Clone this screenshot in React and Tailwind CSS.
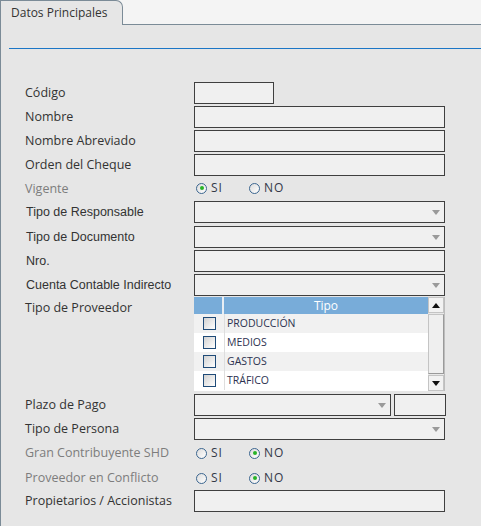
import React from 'react';

const fira = { fontFamily: '"Open Sans", "Noto Sans", sans-serif' };
const arial = { fontFamily: '"Liberation Sans", Arial, sans-serif' };

function Arrow({ className = '' }) {
  return (
    <svg width="8" height="5" viewBox="0 0 8 5" className={className}>
      <path d="M0 0 H8 L4 5 Z" fill="#9a9a9a" />
    </svg>
  );
}

function Input({ className = 'w-[251px]' }) {
  return <div className={`h-[22px] border border-[#3f3f3f] bg-[#f0f0f0] ${className}`} />;
}

function Select({ className = 'w-[251px]' }) {
  return (
    <div className={`h-[22px] border border-[#3f3f3f] bg-[#f0f0f0] flex items-center justify-end pr-[4px] ${className}`}>
      <Arrow />
    </div>
  );
}

function Radio({ checked, label }) {
  return (
    <div className="flex items-center gap-[4px]">
      <span className="w-[11px] h-[11px] rounded-full border border-[#3c6690] bg-gradient-to-br from-[#dcdcdc] to-white flex items-center justify-center">
        {checked && <span className="w-[4px] h-[4px] rounded-full bg-[#27b327]" />}
      </span>
      <span className="text-[12px] text-[#333848] tracking-[1px]" style={fira}>{label}</span>
    </div>
  );
}

function Radios({ value }) {
  return (
    <div className="flex items-center w-[251px] pl-[2px]">
      <div className="w-[53px]"><Radio checked={value === 'SI'} label="SI" /></div>
      <Radio checked={value === 'NO'} label="NO" />
    </div>
  );
}

function Row({ label, font = fira, muted, children, h = 'h-[24px]' }) {
  return (
    <div className={`flex items-start ${h}`}>
      <div
        className={`w-[169px] h-[22px] flex items-center ${font === arial ? 'text-[12.5px] pl-[1px]' : 'text-[12.5px]'} ${muted ? 'text-[#7d7d7d]' : 'text-[#333333]'}`}
        style={font}
      >
        {label}
      </div>
      {children}
    </div>
  );
}

const tipos = ['PRODUCCIÓN', 'MEDIOS', 'GASTOS', 'TRÁFICO'];

function Grid() {
  return (
    <div className="w-[251px] h-[94px] flex">
      <div className="flex-1 flex flex-col bg-white">
        <div className="h-[17px] flex bg-[#78acd9]">
          <div className="w-[30px] border-r-2 border-[#e8eef4]" />
          <div className="flex-1 flex items-center justify-center text-white text-[12px]" style={fira}>Tipo</div>
        </div>
        {tipos.map((t, i) => (
          <div key={t} className={`h-[19px] flex ${i % 2 === 0 ? 'bg-[#f1f1f1]' : 'bg-white'}`}>
            <div className="w-[31px] flex items-center justify-center border-r border-[#dedede]">
              <span className="w-[13px] h-[13px] border border-[#1f4b78] bg-gradient-to-br from-[#d2d2d2] to-white" />
            </div>
            <div className="flex-1 flex items-center pl-[2px] text-[10.5px] text-[#2c3150]" style={fira}>{t}</div>
          </div>
        ))}
      </div>
      <div className="w-[17px] flex flex-col bg-[#e8e8e8] border-r border-[#bdbdbd]">
        <div className="h-[16px] flex items-center justify-center bg-[#f2f2f2] border border-[#c4c4c4]">
          <svg width="8" height="5" viewBox="0 0 8 5"><path d="M0 5 H8 L4 0 Z" fill="#111" /></svg>
        </div>
        <div className="flex-1 mt-[1px] bg-[#efefef] border border-[#c4c4c4] border-r-[#9a9a9a] border-b-[#9a9a9a]" />
        <div className="h-[16px] mt-[1px] flex items-center justify-center bg-[#f2f2f2] border border-[#c4c4c4]">
          <svg width="8" height="5" viewBox="0 0 8 5"><path d="M0 0 H8 L4 5 Z" fill="#111" /></svg>
        </div>
      </div>
    </div>
  );
}

export default function App() {
  return (
    <div className="w-[481px] h-[526px] bg-[#e6e6e6] flex flex-col overflow-hidden">
      {/* Tab strip */}
      <div className="h-[25px] flex bg-[#f4f4f4]">
        <div className="w-[123px] border-t border-l border-r border-[#7b8b97] rounded-tr-[7px] bg-[#e6e6e6] flex items-center pl-[10px] text-[12px] text-[#333333]" style={fira}>
          Datos Principales
        </div>
        <div className="flex-1 border-b border-[#7b8b97]" />
      </div>

      <div className="flex-1 border-l border-[#7b8b97] flex flex-col">
        <div className="mt-[23px] ml-[8px] h-[1px] bg-[#1c76c6]" />

        <div className="mt-[33px] pl-[24px] flex flex-col">
          <Row label="Código"><Input className="w-[80px]" /></Row>
          <Row label="Nombre"><Input /></Row>
          <Row label="Nombre Abreviado"><Input /></Row>
          <Row label="Orden del Cheque"><Input /></Row>
          <Row label="Vigente" muted h="h-[23px]"><div className="h-[20px] flex items-center"><Radios value="SI" /></div></Row>
          <Row label="Tipo de Responsable" font={arial} h="h-[25px]"><Select /></Row>
          <Row label="Tipo de Documento" font={arial}><Select /></Row>
          <Row label="Nro." font={arial}><Input /></Row>
          <Row label="Cuenta Contable Indirecto" font={arial} h="h-[23px]"><Select /></Row>
          <Row label="Tipo de Proveedor" h="h-[97px]"><Grid /></Row>
          <Row label="Plazo de Pago">
            <div className="flex gap-[3px]">
              <Select className="w-[197px]" />
              <Input className="w-[52px]" />
            </div>
          </Row>
          <Row label="Tipo de Persona"><Select /></Row>
          <Row label="Gran Contribuyente SHD" muted h="h-[25px]"><div className="h-[22px] flex items-center"><Radios value="NO" /></div></Row>
          <Row label="Proveedor en Conflicto" muted h="h-[23px]"><div className="h-[22px] flex items-center"><Radios value="NO" /></div></Row>
          <Row label="Propietarios / Accionistas"><Input /></Row>
        </div>
      </div>
    </div>
  );
}
